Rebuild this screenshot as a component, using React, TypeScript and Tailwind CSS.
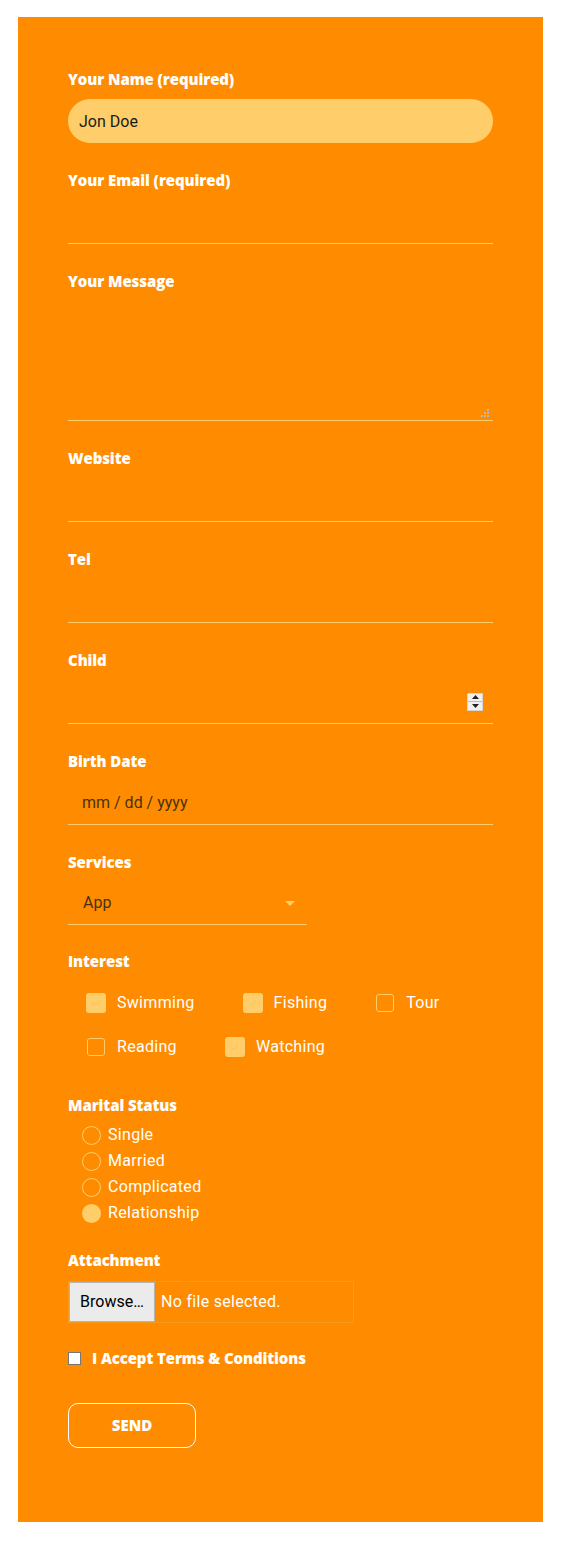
import React from 'react';

const font = { fontFamily: 'Roboto, "Liberation Sans", sans-serif' };

function Label({ children }: { children: React.ReactNode }) {
  return (
    <div className="h-5 text-[15px] leading-5 font-extrabold text-white tracking-[-0.1px] font-['Open_Sans',sans-serif]">
      {children}
    </div>
  );
}

function LineField({ label, children }: { label: string; children?: React.ReactNode }) {
  return (
    <div className="mb-[27px]">
      <Label>{label}</Label>
      <div className="mt-[10px] h-[44px] border-b border-[#ffce6a] flex items-center">{children}</div>
    </div>
  );
}

function Box({ checked }: { checked: boolean }) {
  return checked ? (
    <span className="w-5 h-5 rounded-[3px] bg-[#ffce6a] shrink-0 flex items-center justify-center">
      <svg width="10" height="10" viewBox="0 0 10 10">
        <path d="M2 5.2 L4.2 7.4 L8 2.8" fill="none" stroke="#f6c260" strokeWidth="1" />
      </svg>
    </span>
  ) : (
    <span className="w-[18px] h-[18px] mx-px rounded-[3px] border border-[#ffce6a] shrink-0" />
  );
}

function Check({ label, checked }: { label: string; checked: boolean }) {
  return (
    <div className="flex items-center gap-[11px] h-5">
      <Box checked={checked} />
      <span className="text-[16px] text-white tracking-[0.3px]">{label}</span>
    </div>
  );
}

function Radio({ label, checked }: { label: string; checked?: boolean }) {
  return (
    <div className="flex items-center gap-[7px] h-[26px] pl-[14px]">
      {checked ? (
        <span className="w-[19px] h-[19px] rounded-full bg-[#ffce6a]" />
      ) : (
        <span className="w-[19px] h-[19px] rounded-full border border-[#ffce6a]" />
      )}
      <span className="text-[16px] text-white tracking-[0.3px]">{label}</span>
    </div>
  );
}

export default function App() {
  return (
    <div className="min-h-screen bg-white pt-[17px] pb-[19px]" style={font}>
      <div className="ml-[18px] w-[525px] bg-[#ff8c00] pt-[52px] pb-[74px] px-[50px]">
        {/* Name */}
        <div className="mb-[27px]">
          <Label>Your Name (required)</Label>
          <div className="mt-[10px] h-[44px] rounded-full bg-[#ffce6a] flex items-center px-[11px] pt-[2px] text-[16px] text-[#1a1a1a]">
            Jon Doe
          </div>
        </div>

        <LineField label="Your Email (required)" />

        {/* Message */}
        <div className="mb-[27px]">
          <Label>Your Message</Label>
          <div className="mt-[10px] h-[120px] border-b border-[#ffce6a] relative">
            <svg className="absolute right-[4px] bottom-[3px]" width="8" height="8" viewBox="0 0 8 8">
              <rect x="6" y="0" width="2" height="2" fill="#b9b9b9" />
              <rect x="3" y="3" width="2" height="2" fill="#b9b9b9" />
              <rect x="6" y="3" width="2" height="2" fill="#b9b9b9" />
              <rect x="0" y="6" width="2" height="2" fill="#b9b9b9" />
              <rect x="3" y="6" width="2" height="2" fill="#b9b9b9" />
              <rect x="6" y="6" width="2" height="2" fill="#b9b9b9" />
            </svg>
          </div>
        </div>

        <LineField label="Website" />
        <LineField label="Tel" />

        <LineField label="Child">
          <div className="ml-auto mr-[10px] w-[16px] h-[18px] border border-[#d5d5d5] bg-[#f0f0f0] flex flex-col">
            <div className="flex-1 flex items-center justify-center border-b border-[#bdbdbd]">
              <svg width="7" height="4" viewBox="0 0 7 4"><path d="M0 4 L3.5 0 L7 4 Z" fill="#222" /></svg>
            </div>
            <div className="flex-1 flex items-center justify-center">
              <svg width="7" height="4" viewBox="0 0 7 4"><path d="M0 0 L3.5 4 L7 0 Z" fill="#222" /></svg>
            </div>
          </div>
        </LineField>

        <LineField label="Birth Date">
          <span className="pl-[14px] text-[16px] text-[#4a3210]">mm / dd / yyyy</span>
        </LineField>

        {/* Services */}
        <div className="mb-[26px]">
          <Label>Services</Label>
          <div className="mt-[10px] h-[43px] w-[239px] border-b border-[#ffce6a] flex items-center pl-[15px] pr-[12px]">
            <span className="text-[16px] text-[#4a3210]">App</span>
            <svg className="ml-auto" width="10" height="5" viewBox="0 0 10 5"><path d="M0 0 L10 0 L5 5 Z" fill="#ffce6a" /></svg>
          </div>
        </div>

        {/* Interest */}
        <Label>Interest</Label>
        <div className="pl-[18px] pt-[22px] flex flex-col gap-[24px]">
          <div className="flex gap-[48px]">
            <Check label="Swimming" checked />
            <Check label="Fishing" checked />
            <Check label="Tour" checked={false} />
          </div>
          <div className="flex gap-[48px]">
            <Check label="Reading" checked={false} />
            <Check label="Watching" checked />
          </div>
        </div>

        {/* Marital */}
        <div className="mt-[38px]">
          <Label>Marital Status</Label>
          <div className="mt-[7px] flex flex-col">
            <Radio label="Single" />
            <Radio label="Married" />
            <Radio label="Complicated" />
            <Radio label="Relationship" checked />
          </div>
        </div>

        {/* Attachment */}
        <div className="mt-[24px]">
          <Label>Attachment</Label>
          <div className="mt-[11px] w-[286px] h-[42px] border border-[#f59a1e] flex items-center">
            <div className="h-full w-[86px] bg-[#ebebeb] border border-[#b4b4b4] flex items-center justify-center text-[16px] text-black">
              Browse…
            </div>
            <span className="ml-[6px] text-[16px] text-white tracking-[0.3px]">No file selected.</span>
          </div>
        </div>

        {/* Terms */}
        <div className="mt-[28px] flex items-center gap-[11px] h-[14px]">
          <span className="w-[13px] h-[13px] bg-white border border-[#767676]" />
          <span className="text-[15px] font-extrabold text-white tracking-[-0.1px] font-['Open_Sans',sans-serif]">
            I Accept Terms &amp; Conditions
          </span>
        </div>

        {/* Send */}
        <button className="mt-[38px] w-[128px] h-[45px] rounded-[10px] border border-white text-white text-[15px] font-extrabold font-['Open_Sans',sans-serif]">
          SEND
        </button>
      </div>
    </div>
  );
}
